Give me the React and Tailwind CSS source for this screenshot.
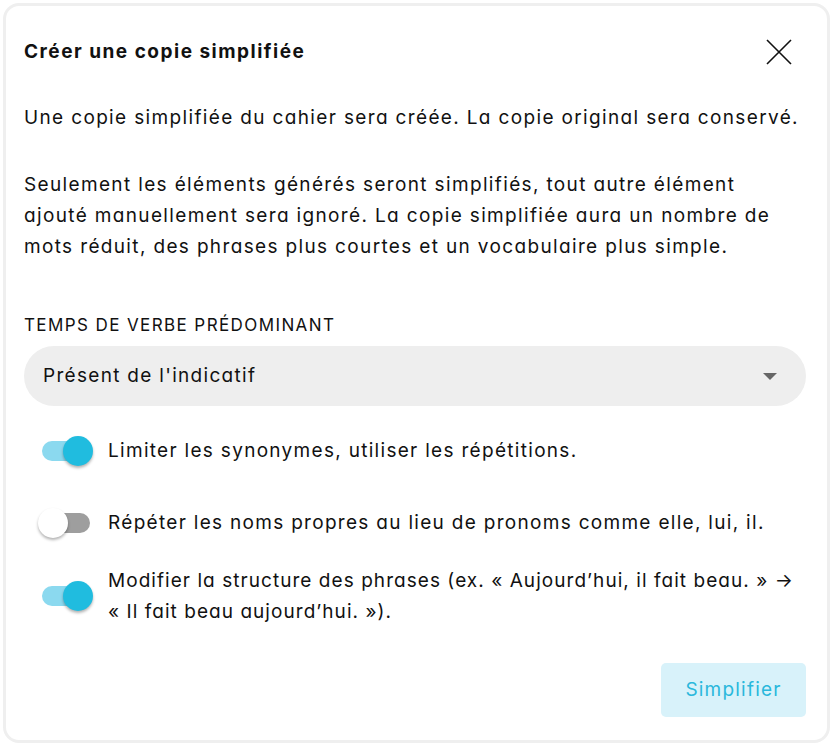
import React, { useState } from 'react';

const Toggle = ({ on, onChange }) => (
    <button
        type="button"
        onClick={onChange}
        className="relative block w-[55px] h-[30px] shrink-0"
    >
        <span className={`absolute left-[4px] top-[5px] w-[48px] h-[20px] rounded-full ${on ? 'bg-[#8bd9ef]' : 'bg-[#9e9e9e]'}`} />
        <span
            className={`absolute top-0 w-[30px] h-[30px] rounded-full shadow-[0_2px_3px_rgba(0,0,0,0.3)] ${on ? 'left-[25px] bg-[#20bcdf]' : 'left-0 bg-white'}`}
        />
    </button>
);

const Option = ({ on, onChange, className = '', children }) => (
    <div className={`flex items-center gap-[15px] ${className}`}>
        <div className="pl-[14px] flex">
            <Toggle on={on} onChange={onChange} />
        </div>
        <div className="flex-1">{children}</div>
    </div>
);

export default function App() {
    const [opts, setOpts] = useState({ synonyms: true, names: false, structure: true });
    const flip = k => setOpts(o => ({ ...o, [k]: !o[k] }));

    return (
        <div className="w-[831px] h-[744px] bg-white pl-[3px] pt-[3px] font-['Inter',sans-serif] [font-feature-settings:'cv11'] text-[#111]">
            <div className="w-[827px] h-[740px] border-[3px] border-[#efefef] rounded-[16px] pl-[18px] pr-[21px] pt-[26px] pb-[23px] flex flex-col">
                {/* Header */}
                <div className="flex items-center justify-between h-[40px]">
                    <h2 className="text-[19px] font-bold tracking-[1.5px]">Créer une copie simplifiée</h2>
                    <button type="button" className="w-[40px] h-[40px] flex items-center justify-center mr-[7px]">
                        <svg width="26" height="26" viewBox="0 0 26 26" fill="none" stroke="#111" strokeWidth="1.6">
                            <path d="M1 1L25 25M25 1L1 25" />
                        </svg>
                    </button>
                </div>

                <div className="text-[19px] leading-[31px] tracking-[1.35px] mt-[30px] flex flex-col gap-[36px]">
                    <p>Une copie simplifiée du cahier sera créée. La copie original sera conservé.</p>
                    <p>
                        Seulement les éléments générés seront simplifiés, tout autre élément
                        <br />
                        ajouté manuellement sera ignoré. La copie simplifiée aura un nombre de
                        <br />
                        mots réduit, des phrases plus courtes et un vocabulaire plus simple.
                    </p>
                </div>

                {/* Verb tense */}
                <div className="mt-[51px]">
                    <div className="text-[17px] uppercase tracking-[1.4px] leading-[24px]">Temps de verbe prédominant</div>
                    <div className="mt-[9px] h-[60px] rounded-full bg-[#eeeeee] flex items-center justify-between pl-[19px] pr-[29px]">
                        <span className="text-[19px] tracking-[1.3px]">Présent de l'indicatif</span>
                        <svg width="14" height="7" viewBox="0 0 14 7">
                            <path d="M0 0H14L7 7Z" fill="#666" />
                        </svg>
                    </div>
                </div>

                {/* Options */}
                <div className="flex flex-col text-[19px] leading-[31px] tracking-[1.3px]">
                    <Option className="mt-[29px]" on={opts.synonyms} onChange={() => flip('synonyms')}>
                        Limiter les synonymes, utiliser les répétitions.
                    </Option>
                    <Option className="mt-[41px]" on={opts.names} onChange={() => flip('names')}>
                        Répéter les noms propres au lieu de pronoms comme elle, lui, il.
                    </Option>
                    <Option className="mt-[27px]" on={opts.structure} onChange={() => flip('structure')}>
                        <span className="whitespace-nowrap tracking-[1.05px]">
                            Modifier la structure des phrases (ex. « Aujourd’hui, il fait beau. » →
                            <br />
                            « Il fait beau aujourd’hui. »).
                        </span>
                    </Option>
                </div>

                <div className="mt-auto flex justify-end">
                    <button type="button" className="w-[145px] h-[54px] rounded-[5px] bg-[#d8f2fa] text-[#2ab8dc] text-[19px] tracking-[1.2px]">
                        Simplifier
                    </button>
                </div>
            </div>
        </div>
    );
}
